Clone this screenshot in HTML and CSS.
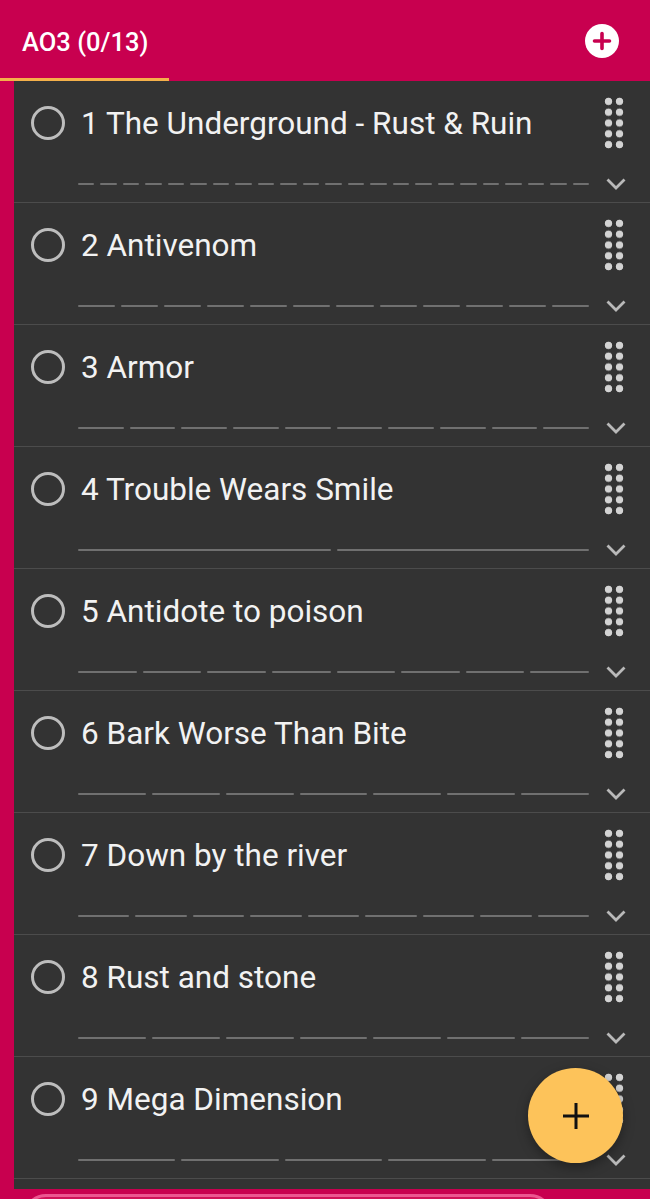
FILE: index.html
```html
<!DOCTYPE html>
<html lang="en">
<head>
    <meta charset="UTF-8">
    <meta name="viewport" content="width=device-width, initial-scale=1.0">
    <title>AO3</title>
    <link rel="stylesheet" href="styles.css">
</head>
<body>
    <header class="tabbar">
        <div class="tab active">AO3 (0/13)</div>
        <button class="add-list" aria-label="Add list">
            <svg width="34" height="34" viewBox="0 0 34 34">
                <circle cx="17" cy="17" r="17" fill="#fff"/>
                <path d="M17 9.5v15M9.5 17h15" stroke="#c8004f" stroke-width="3.6" stroke-linecap="round"/>
            </svg>
        </button>
    </header>

    <main class="list-panel">
        <ul class="task-list" id="taskList"></ul>
    </main>

    <div class="composer"></div>

    <button class="fab" aria-label="Add task">
        <svg width="30" height="30" viewBox="0 0 30 30">
            <path d="M15 2v26M2 15h26" stroke="#111" stroke-width="3"/>
        </svg>
    </button>

    <script>
        const tasks = [
            { title: '1 The Underground - Rust & Ruin', parts: 23 },
            { title: '2 Antivenom', parts: 12 },
            { title: '3 Armor', parts: 10 },
            { title: '4 Trouble Wears Smile', parts: 2 },
            { title: '5 Antidote to poison', parts: 8 },
            { title: '6 Bark Worse Than Bite', parts: 7 },
            { title: '7 Down by the river', parts: 9 },
            { title: '8 Rust and stone', parts: 7 },
            { title: '9 Mega Dimension', parts: 5 }
        ];

        const list = document.getElementById('taskList');

        tasks.forEach(task => {
            const li = document.createElement('li');
            li.className = 'task';

            const check = document.createElement('span');
            check.className = 'check';

            const title = document.createElement('span');
            title.className = 'task-title';
            title.textContent = task.title;

            const handle = document.createElement('span');
            handle.className = 'handle';

            const progress = document.createElement('div');
            progress.className = 'progress';
            for (let i = 0; i < task.parts; i++) {
                progress.appendChild(document.createElement('i'));
            }

            li.append(check, title, handle, document.createElement('span'), progress);
            li.insertAdjacentHTML('beforeend',
                '<svg class="chevron" width="20" height="12" viewBox="0 0 20 12"><path d="M1.5 1.5L10 10l8.5-8.5" fill="none" stroke="#b9b9b9" stroke-width="2.8"/></svg>');
            list.appendChild(li);
        });
    </script>
</body>
</html>
```

FILE: styles.css
```css
html, body {
    margin: 0;
    padding: 0;
    height: 100%;
    overflow: hidden;
}

body {
    background: #c8004f;
    font-family: Roboto, "Noto Sans", sans-serif;
    color: #f2f2f2;
}

.tabbar {
    height: 81px;
    display: flex;
    justify-content: space-between;
    align-items: stretch;
}

.tab {
    width: 169px;
    box-sizing: border-box;
    padding: 6px 0 0 22px;
    display: flex;
    align-items: center;
    font-size: 25.5px;
    font-weight: 500;
    color: #fff;
    border-bottom: 3px solid #f4b04a;
}

.add-list {
    align-self: center;
    margin-right: 31px;
    padding: 0;
    border: none;
    background: none;
    display: flex;
    cursor: pointer;
}

.list-panel {
    margin-left: 14px;
    background: #333333;
    padding-bottom: 10px;
}

.task-list {
    list-style: none;
    margin: 0;
    padding: 0;
}

.task {
    height: 122px;
    box-sizing: border-box;
    display: grid;
    grid-template-columns: 34px 1fr 30px;
    grid-template-rows: 84px 1fr;
    column-gap: 13px;
    align-items: center;
    padding: 0 18px 0 17px;
    border-bottom: 1px solid #4c4c4c;
}

.check {
    width: 34px;
    height: 34px;
    box-sizing: border-box;
    border: 3px solid #bdbdbd;
    border-radius: 50%;
}

.task-title {
    padding-left: 3px;
    font-size: 31.5px;
    white-space: nowrap;
    overflow: hidden;
}

.handle {
    justify-self: start;
    margin-left: 1px;
    width: 22px;
    height: 54px;
    background-image: radial-gradient(circle, #d3d3d3 3.4px, transparent 4.1px);
    background-size: 11px 10.8px;
}

.progress {
    display: flex;
    gap: 6px;
}

.progress i {
    flex: 1;
    height: 2px;
    border-radius: 1px;
    background: #707070;
}

.chevron {
    justify-self: start;
    margin-left: 4px;
}

.composer {
    margin: 5px 97px 0 23px;
    height: 40px;
    border: 3px solid #ec5790;
    border-radius: 24px;
    background: #d01259;
}

.fab {
    position: fixed;
    right: 27px;
    bottom: 36px;
    width: 95px;
    height: 95px;
    border: none;
    border-radius: 50%;
    background: #fdc35a;
    box-shadow: 0 4px 12px rgba(0, 0, 0, 0.35);
    display: flex;
    align-items: center;
    justify-content: center;
    cursor: pointer;
}
```
